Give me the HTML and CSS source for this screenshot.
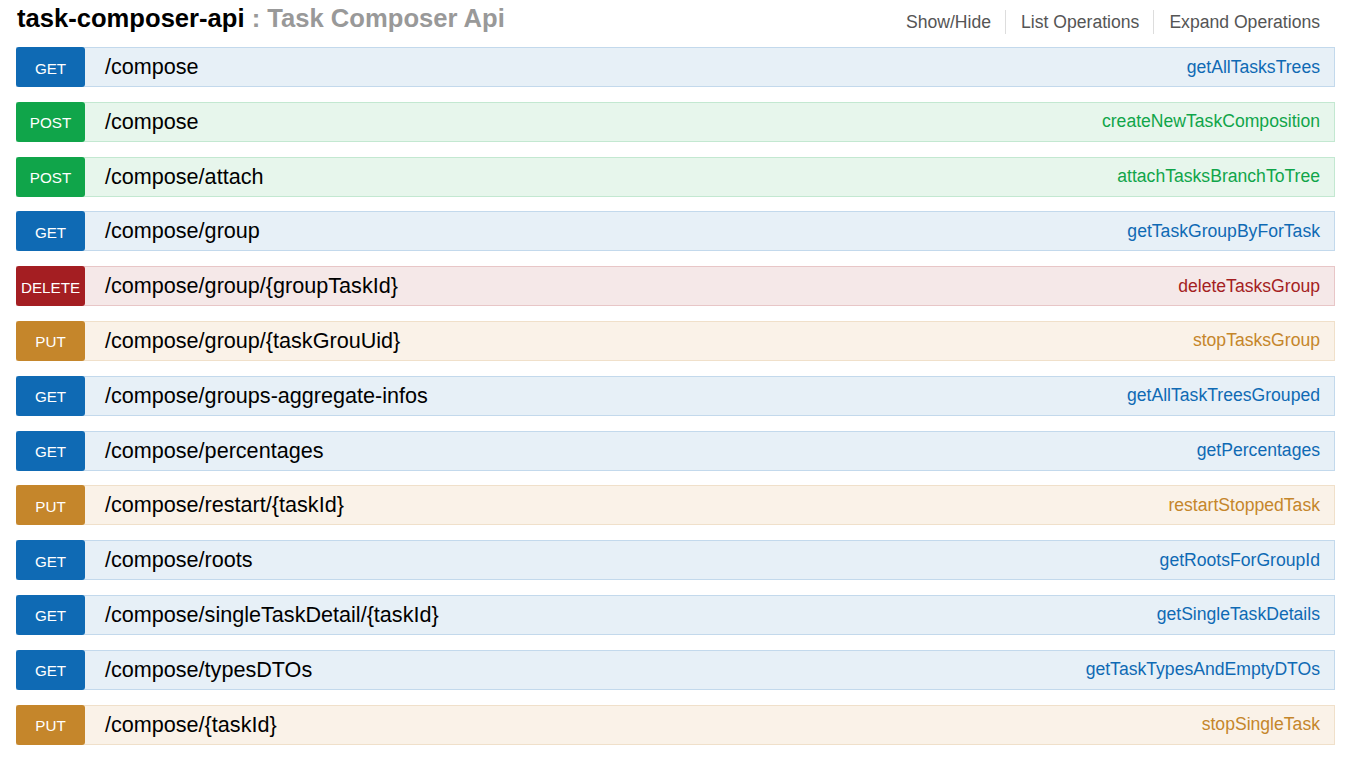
FILE: index.html
```html
<!DOCTYPE html>
<html>
<head>
<meta charset="utf-8">
<title>Task Composer Api</title>
<link rel="stylesheet" href="styles.css">
</head>
<body>
<div class="resource">
  <div class="heading">
    <h2 class="title"><span class="name">task-composer-api</span><span class="desc"> : Task Composer Api</span></h2>
    <ul class="options">
      <li><a>Show/Hide</a></li>
      <li><a>List Operations</a></li>
      <li><a>Expand Operations</a></li>
    </ul>
  </div>
  <ul class="ops">
    <li class="op get"><span class="method">GET</span><span class="path">/compose</span><span class="nick">getAllTasksTrees</span></li>
    <li class="op post"><span class="method">POST</span><span class="path">/compose</span><span class="nick">createNewTaskComposition</span></li>
    <li class="op post"><span class="method">POST</span><span class="path">/compose/attach</span><span class="nick">attachTasksBranchToTree</span></li>
    <li class="op get"><span class="method">GET</span><span class="path">/compose/group</span><span class="nick">getTaskGroupByForTask</span></li>
    <li class="op delete"><span class="method">DELETE</span><span class="path">/compose/group/{groupTaskId}</span><span class="nick">deleteTasksGroup</span></li>
    <li class="op put"><span class="method">PUT</span><span class="path">/compose/group/{taskGrouUid}</span><span class="nick">stopTasksGroup</span></li>
    <li class="op get"><span class="method">GET</span><span class="path">/compose/groups-aggregate-infos</span><span class="nick">getAllTaskTreesGrouped</span></li>
    <li class="op get"><span class="method">GET</span><span class="path">/compose/percentages</span><span class="nick">getPercentages</span></li>
    <li class="op put"><span class="method">PUT</span><span class="path">/compose/restart/{taskId}</span><span class="nick">restartStoppedTask</span></li>
    <li class="op get"><span class="method">GET</span><span class="path">/compose/roots</span><span class="nick">getRootsForGroupId</span></li>
    <li class="op get"><span class="method">GET</span><span class="path">/compose/singleTaskDetail/{taskId}</span><span class="nick">getSingleTaskDetails</span></li>
    <li class="op get"><span class="method">GET</span><span class="path">/compose/typesDTOs</span><span class="nick">getTaskTypesAndEmptyDTOs</span></li>
    <li class="op put"><span class="method">PUT</span><span class="path">/compose/{taskId}</span><span class="nick">stopSingleTask</span></li>
  </ul>
</div>
</body>
</html>
```

FILE: styles.css
```css
html, body {
  margin: 0;
  padding: 0;
  background: #ffffff;
  font-family: "Liberation Sans", Arial, sans-serif;
}

.resource {
  margin: 0 14px 0 16px;
}

.heading {
  display: flex;
  justify-content: space-between;
  align-items: flex-start;
  margin-bottom: 11px;
}

.title {
  margin: 0 0 0 1px;
  font-size: 25.6px;
  line-height: 36px;
  font-weight: bold;
}

.title .name {
  color: #000000;
}

.title .desc {
  color: #999999;
}

.options {
  display: flex;
  list-style: none;
  margin: 10px 0 0 0;
  padding: 0;
}

.options li {
  padding: 0 14px 0 15px;
  border-left: 1px solid #dddddd;
  font-size: 17.6px;
  line-height: 24px;
  color: #555555;
}

.options li:first-child {
  border-left: none;
}

.options li:last-child {
  padding-right: 15px;
}

.ops {
  list-style: none;
  margin: 0;
  padding: 0;
  display: flex;
  flex-direction: column;
  gap: 14.8px;
}

.op {
  display: flex;
  align-items: center;
  height: 38px;
  border: 1px solid;
}

.method {
  flex: none;
  width: 69px;
  height: 40px;
  margin: -1px 0 -1px -1px;
  border-radius: 3px;
  color: #ffffff;
  font-size: 15.2px;
  display: flex;
  align-items: center;
  justify-content: center;
  padding-top: 2px;
  box-sizing: border-box;
}

.path {
  flex: 1;
  padding-left: 20px;
  font-size: 21.6px;
  color: #000000;
}

.nick {
  padding-right: 14px;
  font-size: 17.6px;
}

.get { background: #e7f0f7; border-color: #c3d9ec; }
.get .method { background: #0f6ab4; }
.get .nick { color: #0f6ab4; }

.post { background: #e7f6ec; border-color: #c3e8d1; }
.post .method { background: #10a54a; }
.post .nick { color: #10a54a; }

.delete { background: #f5e8e8; border-color: #e8c6c7; }
.delete .method { background: #a41e22; }
.delete .nick { color: #a41e22; }

.put { background: #faf2e8; border-color: #f0e0ca; }
.put .method { background: #c5862b; }
.put .nick { color: #c5862b; }
```
